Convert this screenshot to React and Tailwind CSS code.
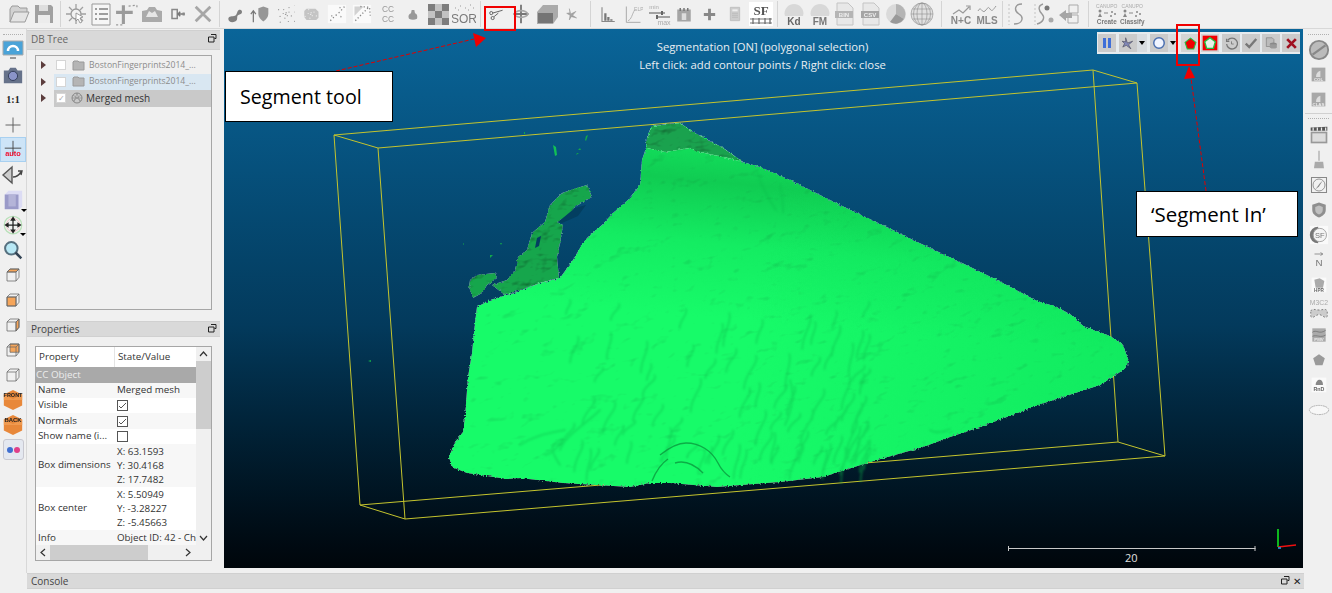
const Ico = ({ children, s = 22 }) => (
  <svg width={s} height={s} viewBox="0 0 24 24" fill="none" className="blur-[0.3px] shrink-0">{children}</svg>
)
const T = ({ x = 12, y = 16, size = 9, fill = '#777', w = 700, children }) => (
  <text x={x} y={y} fontSize={size} fill={fill} fontWeight={w} textAnchor="middle" fontFamily="Liberation Sans, sans-serif">{children}</text>
)
const Dots = ({ n = 9, r = 0.9, fill = '#777' }) => (
  <g fill={fill}>{Array.from({ length: n }).map((_, i) => (
    <circle key={i} cx={12 + Math.cos(i * 2.4) * (i * 0.95)} cy={12 + Math.sin(i * 2.4) * (i * 0.95)} r={r} />
  ))}</g>
)
const Cube = ({ face }) => (
  <g stroke="#666" strokeWidth="1" fill="none">
    {face === 'back' && <path d="M8 4h12v11H8z" fill="#f5a55a" />}
    {face === 'top' && <path d="M4 8l4-4h12l-4 4z" fill="#f5a55a" />}
    {face === 'right' && <path d="M16 8l4-4v11l-4 5z" fill="#f5a55a" />}
    {face === 'front' && <path d="M4 8h12v12H4z" fill="#f5a55a" />}
    <path d="M4 8h12v12H4zM4 8l4-4h12v11l-4 5M16 8l4-4" />
  </g>
)

const topIcons = [
  [
    <Ico s={24}><path d="M3 20V7l2-3h6l2 2h7v4" fill="#d2d2d2" stroke="#9a9a9a" /><path d="M3 20l4-10h15l-4 10z" fill="#e4e4e4" stroke="#9a9a9a" /></Ico>,
    <Ico s={24}><path d="M3 3h16l2 2v16H3z" fill="#a0a0a0" /><path d="M7 3h9v6H7z" fill="#dedede" /><path d="M6 13h12v8H6z" fill="#ececec" /></Ico>,
  ],
  [
    <Ico s={24}><circle cx="12" cy="12" r="5" stroke="#9a9a9a" strokeWidth="1.3" fill="#f2f2f2" /><path d="M12 2v5M12 17v5M2 12h5M17 12h5M5 5l3 3M16 16l3 3M5 19l3-3M16 8l3-3" stroke="#a0a0a0" strokeWidth="1.3" /><path d="M12 11l7 4-3 1 2 4-2 1-2-4-2 2z" fill="#fff" stroke="#888" strokeWidth=".8" /></Ico>,
    <Ico s={24}><path d="M3 2h18v21H3z" stroke="#999" fill="#f6f6f6" /><path d="M6 7h2M6 12h2M6 17h2M10 7h9M10 12h9M10 17h9" stroke="#808080" strokeWidth="1.5" /></Ico>,
    <Ico s={25}><path d="M9 3v18M2 10h16" stroke="#9a9a9a" strokeWidth="3" /><path d="M14 4l8-1M22 3v4M2 22h7" stroke="#999" strokeWidth="1.2" strokeDasharray="2 2" /></Ico>,
    <Ico s={24}><path d="M2 9l5-1 2-3h6l2 3 5 1v11H2z" fill="#aaa" /><path d="M9 9l3 2 3-2 3 6H6z" fill="#e6e6e6" /></Ico>,
    <Ico s={18}><path d="M4 6h7v12H4z" stroke="#888" strokeWidth="2" /><path d="M21 12h-9M15 9l-3 3 3 3" stroke="#777" strokeWidth="2" /><path d="M18 10h3v4h-3z" fill="#888" /></Ico>,
    <Ico s={22}><path d="M4 4l16 16M20 4L4 20" stroke="#a6a6a6" strokeWidth="3" /></Ico>,
  ],
  [
    <Ico s={20}><path d="M4 18c0-4 5-3 8-4s2-6 5-7 4 2 3 4-4 1-5 3 1 5-3 7-8 0-8-3z" fill="#808080" /></Ico>,
    <Ico s={20}><path d="M4 22V9M1 12l3-4 3 4" stroke="#777" strokeWidth="1.5" /><path d="M10 5l6-2 6 2v7c0 4-3 7-6 9-3-2-6-5-6-9z" fill="#969696" /></Ico>,
    <Ico s={18}><Dots n={24} r={0.8} fill="#909090" /></Ico>,
    <Ico s={18}><path d="M3 8l3-3h12l4 4v8l-3 3H6l-3-4z" fill="#c4c4c4" /><Dots n={16} r={0.8} fill="#eee" /></Ico>,
    <Ico s={20}><path d="M1 1h22v22H1z" fill="#fafafa" /><path d="M4 20l6-6 5-4 6-7" stroke="#888" strokeWidth="1.6" strokeDasharray="1.5 3" /><path d="M5 14l3 1M15 4l3 2M16 15l3 1" stroke="#999" strokeWidth="1.6" strokeDasharray="1.5 2" /></Ico>,
    <Ico s={20}><path d="M1 1h22v22H1z" fill="#fafafa" /><path d="M3 3h11L3 14z" fill="#aaa" opacity=".5" /><path d="M4 20L20 4M10 3l11 1 1 10" stroke="#888" strokeWidth="1.6" strokeDasharray="1.5 2.5" /></Ico>,
    <Ico s={20}><T y={10} size={10} fill="#999" w={400}>CC</T><T y={21} size={10} fill="#999" w={400}>CC</T></Ico>,
    <Ico s={16}><path d="M6 19c-2-4 0-7 3-8l1-5h4l1 5c3 1 4 4 3 8-4 2-8 2-12 0z" fill="#999" /></Ico>,
    <Ico s={21}><path d="M0 0h8v8H0zM16 0h8v8h-8zM8 8h8v8H8zM0 16h8v8H0zM16 16h8v8h-8z" fill="#7d7d7d" /><path d="M8 0h8v8H8zM0 8h8v8H0zM16 8h8v8h-8zM8 16h8v8H8z" fill="#c2c2c2" /></Ico>,
    <Ico s={24}><T y={21} size={12} fill="#7a7a7a" w={400}>SOR</T><path d="M3 6h1M8 4h1M13 6h1M18 3h1M6 8h1M16 8h1M21 6h1" stroke="#999" /></Ico>,
  ],
  [
    <Ico s={17}><circle cx="6" cy="10" r="2.2" stroke="#666" strokeWidth="1.4" /><circle cx="8" cy="17" r="2.2" stroke="#666" strokeWidth="1.4" /><path d="M8 10l14-4M10 15l6-5" stroke="#666" strokeWidth="1.4" /></Ico>,
    <Ico s={20}><path d="M12 1v22M3 12h18" stroke="#777" strokeWidth="2.2" /><ellipse cx="12" cy="12" rx="8" ry="4" stroke="#a8a8a8" strokeWidth="2" /></Ico>,
    <Ico s={24}><path d="M2 10l6-7h15v12l-5 7H2z" fill="#ababab" /><path d="M3 11h15v10H3z" fill="#757575" /></Ico>,
    <Ico s={16}><path d="M8 4l2 8 8-4-5 6 6 4-8-2-3 5 1-7-5-3 5-1z" fill="#a5a5a5" stroke="#888" strokeWidth=".6" /></Ico>,
  ],
  [
    <Ico s={18}><path d="M4 3v19h17" stroke="#888" strokeWidth="1.5" /><path d="M7 11h3v10H7zM11 16h3v5h-3zM15 19h3v2h-3z" fill="#777" /></Ico>,
    <Ico s={20}><path d="M4 3v19h17" stroke="#aaa" strokeWidth="1.2" /><path d="M6 20c4-1 5-8 8-13" stroke="#aaa" /><T x={19} y={8} size={6} fill="#aaa" w={400}>ELP</T></Ico>,
    <Ico s={24}><T x={7} y={7} size={6} fill="#aaa" w={400}>min</T><path d="M2 11h16M10 15h13" stroke="#888" strokeWidth="1.5" /><path d="M15 9v4M10 13v4" stroke="#666" strokeWidth="2" /><T x={17} y={23} size={7} fill="#aaa" w={400}>max</T></Ico>,
    <Ico s={18}><path d="M3 6h18v16H3z" fill="#a5a5a5" /><path d="M7 4v4M12 4v4M17 4v4" stroke="#777" strokeWidth="2" /><path d="M9 11h6v9H9z" fill="#ddd" /></Ico>,
    <Ico s={17}><path d="M12 4v16M4 12h16" stroke="#888" strokeWidth="4" /></Ico>,
    <Ico s={16}><path d="M5 2h14v20H5z" fill="#cdcdcd" stroke="#b4b4b4" /><path d="M8 5h8v3H8z" fill="#eee" /><path d="M8 11h8M8 14h8M8 17h8" stroke="#aaa" strokeDasharray="2 1" /></Ico>,
    <Ico s={24}><path d="M0 0h24v24H0z" fill="#fff" /><text x="12" y="13" textAnchor="middle" fontSize="13" fontWeight="700" fill="#555" fontFamily="Liberation Serif, serif">SF</text><path d="M1 17h22M1 21h22" stroke="#777" strokeWidth="1.2" /><path d="M4 16v6M10 16v6M16 16v6M21 16v6" stroke="#666" strokeWidth="1.2" /></Ico>,
  ],
  [
    <Ico s={24}><path d="M3 14c-2-6 3-12 9-12s11 6 9 12z" fill="#d8d8d8" /><T y={23} size={10} fill="#666">Kd</T></Ico>,
    <Ico s={24}><path d="M3 14c-2-6 3-12 9-12s11 6 9 12z" fill="#d8d8d8" /><T y={23} size={10} fill="#777">FM</T></Ico>,
    <Ico s={24}><path d="M4 1h11l5 5v17H4z" fill="#e8e8e8" stroke="#c4c4c4" /><path d="M2 9h18v7H2z" fill="#b5b5b5" /><T x={11} y={15} size={6} fill="#eee">BIN</T></Ico>,
    <Ico s={24}><path d="M4 1h11l5 5v17H4z" fill="#e8e8e8" stroke="#c4c4c4" /><path d="M2 9h18v7H2z" fill="#a5a5a5" /><T x={11} y={15} size={6} fill="#eee">CSV</T></Ico>,
    <Ico s={24}><circle cx="12" cy="12" r="10" fill="#dadada" /><path d="M12 12V2a10 10 0 0 1 8 15z" fill="#b4b4b4" /><path d="M12 12l8 5a10 10 0 0 1-14 3z" fill="#999" /></Ico>,
    <Ico s={24}><circle cx="12" cy="12" r="11" fill="#e0e0e0" stroke="#8d8d8d" strokeWidth=".6" /><path d="M1 12h22M2.5 7h19M2.5 17h19M12 1v22" stroke="#8d8d8d" strokeWidth=".6" /><ellipse cx="12" cy="12" rx="5" ry="11" stroke="#8d8d8d" strokeWidth=".6" /><ellipse cx="12" cy="12" rx="8.5" ry="11" stroke="#8d8d8d" strokeWidth=".6" /></Ico>,
  ],
  [
    <Ico s={24}><T y={22} size={10} fill="#888">N+C</T><path d="M4 12l6-4 4 3 6-6M17 4h4v4" stroke="#999" strokeWidth="1.2" /></Ico>,
    <Ico s={24}><T y={22} size={10} fill="#888">MLS</T><path d="M3 9c3-6 4 3 7 0s3-5 5-2 3 1 6-3" stroke="#999" /></Ico>,
  ],
  [
    <Ico s={24}><path d="M3 2v21" stroke="#c4c4c4" strokeDasharray="2 2" /><path d="M16 2c-8 0-8 7-3 10s4 10-5 10" stroke="#999" strokeWidth="1.4" /></Ico>,
    <Ico s={24}><path d="M3 2v21" stroke="#c4c4c4" strokeDasharray="2 2" /><path d="M11 2c-6 2-4 7-1 10s2 8-5 10" stroke="#999" strokeWidth="1.4" /><circle cx="15" cy="6" r="2.5" fill="#777" /><circle cx="19" cy="18" r="2.5" fill="#aaa" /></Ico>,
    <Ico s={24}><path d="M12 3h9v8h-9z" stroke="#aaa" /><path d="M2 13l7-5v3h6v5H9v3z" fill="#a5a5a5" /><path d="M11 13h10v8H11z" stroke="#aaa" /></Ico>,
  ],
  [
    <Canupo label="Create" />,
    <Canupo label="Classify" />,
  ],
]
const sepWidths = ['w-[6px]', 'w-[6px]', 'w-[6px]', 'w-[10px]', 'w-[8px]', 'w-[14px]', 'w-[6px]', 'w-[12px]']

function Canupo({ label }) {
  return (
    <div className="w-[25px] flex flex-col items-center blur-[0.2px] font-['Liberation_Sans',sans-serif]">
      <span className="text-[5px] leading-[6px] text-[#aaa]">CANUPO</span>
      <svg width="20" height="9" viewBox="0 0 20 9" fill="#888"><circle cx="3" cy="2" r="1.5" /><path d="M1 8l2-4 2 4z" /><path d="M7 4h4" stroke="#888" /><circle cx="15" cy="3" r="1" /><circle cx="18" cy="5" r="1" /><circle cx="14" cy="7" r="1" /></svg>
      <span className="text-[6.4px] leading-[8px] font-bold text-[#777]">{label}</span>
    </div>
  )
}

const leftIcons = [
  <Ico s={24}><path d="M2 3h20v14H2z" fill="#4aa3d8" stroke="#aaa" /><path d="M7 13a5 5 0 0 1 10 0" stroke="#fff" strokeWidth="2.5" /><path d="M9 20h6" stroke="#999" strokeWidth="2" /></Ico>,
  <Ico s={22}><path d="M2 7h5l2-3h6l2 3h5v14H2z" fill="#66728a" /><circle cx="12" cy="13" r="5" fill="#8a94c8" stroke="#2f3a55" /></Ico>,
  <span className="text-[10px] font-bold text-[#222] font-['Liberation_Serif',serif]">1:1</span>,
  <Ico s={18}><path d="M12 2v20M2 12h20" stroke="#555" strokeWidth="1.2" /></Ico>,
  <Ico s={22}><path d="M12 2v15M3 10h18" stroke="#444" strokeWidth="1" /><text x="12" y="18" textAnchor="middle" fontSize="8" fontWeight="700" fill="#f01030" fontFamily="Liberation Sans, sans-serif">auto</text></Ico>,
  <Ico s={24}><path d="M2 12l9-8v16z" fill="#ccc" stroke="#555" strokeWidth="1.4" /><path d="M12 14c4 0 6-2 8-5M17 8l4 0-1 4" stroke="#444" strokeWidth="1.4" /></Ico>,
  <div className="relative"><Ico s={22}><path d="M3 6l4-4h15v17l-3 3H3z" fill="#dcdcf4" /><path d="M3 6h15v16H3z" fill="#9a9ac8" /><path d="M7 6h8v13H7z" fill="#b4b4d8" /></Ico><span className="absolute right-[-3px] bottom-[-1px] border-x-[3px] border-t-[3px] border-x-transparent border-t-black" /></div>,
  <div className="relative"><Ico s={20}><circle cx="12" cy="12" r="10.5" stroke="#b8e0b8" strokeWidth="1.5" /><circle cx="12" cy="12" r="8" stroke="#f0c0c0" /><path d="M12 3v18M3 12h18M12 3l-2 3h4zM12 21l-2-3h4zM3 12l3-2v4zM21 12l-3-2v4z" stroke="#222" strokeWidth="1.5" /></Ico><span className="absolute right-[-3px] bottom-[-1px] border-x-[3px] border-t-[3px] border-x-transparent border-t-black" /></div>,
  <Ico s={20}><circle cx="10" cy="10" r="7.5" fill="#b8e8f5" stroke="#56707f" strokeWidth="2.4" /><path d="M15 15l7 7" stroke="#345" strokeWidth="3" /></Ico>,
  <Ico s={18}><Cube face="top" /></Ico>,
  <Ico s={18}><Cube face="front" /></Ico>,
  <Ico s={18}><Cube face="right" /></Ico>,
  <Ico s={18}><Cube face="back" /></Ico>,
  <Ico s={18}><Cube /></Ico>,
  <Ico s={22}><path d="M12 1l10 5v12l-10 5-10-5V6z" fill="#e8883a" /><path d="M2 6l10 5 10-5v6l-10 0-10 0z" fill="#f09a50" /><T y={9} size={6} fill="#222">FRONT</T></Ico>,
  <Ico s={22}><path d="M12 1l10 5v12l-10 5-10-5V6z" fill="#e8883a" /><path d="M2 6l10 5 10-5v6l-10 0-10 0z" fill="#f09a50" /><T y={9} size={6.5} fill="#222">BACK</T></Ico>,
  <div className="w-[21px] h-[21px] rounded-[3px] border border-[#c8c8d0] bg-[#e4e8f0] flex items-center justify-center gap-[1px]"><span className="w-[6px] h-[6px] rounded-full bg-[#3f6fd0]" /><span className="w-[6px] h-[6px] rounded-full bg-[#e0408a]" /></div>,
]

const Cloud = ({ label }) => (
  <Ico s={15}><path d="M1 1h22v22H1z" fill="#a8a8a8" /><path d="M8 16c0-6 3-9 7-10v10z" fill="#ddd" /><T y={22} size={7} fill="#eee">{label}</T></Ico>
)
const rightTop = [
  <Ico s={22}><circle cx="12" cy="12" r="10" fill="#bbb" stroke="#888" strokeWidth="2" /><path d="M5 17L19 7" stroke="#888" strokeWidth="2.5" /></Ico>,
  <Cloud label="COL" />,
  <Cloud label="CLAS" />,
]
const rightBottom = [
  <Ico s={20}><path d="M2 8h20v14H2z" fill="#999" /><path d="M4 10h16v10H4z" fill="#ddd" /><path d="M2 3l20-1v5H2z" fill="#555" /><path d="M5 3v4M10 3v4M15 3v4M20 3v4" stroke="#eee" strokeWidth="1.5" /></Ico>,
  <Ico s={20}><path d="M11 1h2v12h-2z" fill="#bbb" /><path d="M7 14h10l1 8H6z" fill="#aaa" /></Ico>,
  <Ico s={18}><path d="M2 2h20v20H2z" stroke="#888" strokeWidth="1.4" fill="#f2f2f2" /><circle cx="12" cy="12" r="8" stroke="#777" /><path d="M7 18l6-8 4-4-5 8z" fill="#888" /></Ico>,
  <Ico s={18}><path d="M12 2l9 3v7c0 5-4 8-9 10-5-2-9-5-9-10V5z" fill="#8f8f8f" /><path d="M12 6l5 2v4c0 3-2 5-5 6-3-1-5-3-5-6V8z" fill="#c0c0c0" /></Ico>,
  <Ico s={20}><path d="M1 1h22v22H1z" fill="#fafafa" /><path d="M11 2a10 10 0 0 0 0 20z" fill="#777" /><circle cx="13" cy="12" r="8" fill="#f4f4f4" stroke="#999" /><T x={13} y={16} size={9} fill="#777" w={400}>SF</T></Ico>,
  <Ico s={18}><path d="M6 4h11M14 2l3 2-3 2" stroke="#777" /><T y={20} size={13} fill="#777" w={400}>N</T></Ico>,
  <Ico s={16}><path d="M1 1h22v22H1z" fill="#fafafa" /><path d="M5 4l8-2 7 4-2 10H7z" fill="#aaa" /><T y={22} size={7} fill="#666">HPR</T></Ico>,
  <Ico s={22}><T y={7} size={7.5} fill="#aaa" w={400}>M3C2</T><path d="M3 13c2-3 5-1 9-1s7-2 9 1v6c-3 3-5-2-9-2s-6 5-9 2z" fill="#ccc" stroke="#777" strokeDasharray="2 2" /></Ico>,
  <Ico s={16}><path d="M2 2h20v20H2z" fill="#aaa" /><path d="M2 8c6-5 10 4 20-3M2 14c7-3 12 3 20-2" stroke="#666" /><T y={21} size={6.5} fill="#eee">PMV</T></Ico>,
  <Ico s={14}><path d="M12 2l10 7-4 12H6L2 9z" fill="#9a9a9a" /></Ico>,
  <Ico s={16}><path d="M1 1h22v22H1z" fill="#fafafa" /><path d="M7 12c0-5 3-8 6-8s5 3 5 8z" fill="#888" /><T y={21} size={8} fill="#666">RnD</T></Ico>,
  <Ico s={22}><ellipse cx="12" cy="12" rx="10.5" ry="5" stroke="#aaa" fill="#f7f7f7" strokeDasharray="2 .6" /></Ico>,
]

const Grip = () => <div className="border-t border-dotted border-[#b0b0b0] mx-[3px] mb-[2px]" />

const VSep = ({ className }) => (
  <div className={`${className} h-[26px] shrink-0 flex justify-center gap-[2px]`}>
    <div className="w-px h-full bg-[#d4d4d4]" />
  </div>
)

function TopBar() {
  return (
    <div className="h-[29px] shrink-0 flex items-center pl-[6px] bg-[#f0f0f0] border-b border-[#d8d8d8]">
      {topIcons.map((group, g) => (
        <div key={g} className="flex items-center">
          {group.map((icon, i) => (
            <div key={i} className="w-[25.5px] h-[26px] flex items-center justify-center shrink-0">{icon}</div>
          ))}
          {g < sepWidths.length && <VSep className={sepWidths[g]} />}
        </div>
      ))}
    </div>
  )
}

function SideBar({ children, className }) {
  return <div className={`shrink-0 bg-[#f0f0f0] pt-[5px] ${className}`}>{children}</div>
}

const Slot = ({ children, active }) => (
  <div className={`h-[25px] flex items-center justify-center ${active ? 'bg-[#cde4f7] border border-[#a8d0f0]' : ''}`}>{children}</div>
)

const DockIcon = () => (
  <svg width="9" height="9" viewBox="0 0 9 9" fill="none" stroke="#222" className="shrink-0 mt-[2px]"><path d="M3 .5h5v4H6.5M.5 3h5.5v5H.5z" /></svg>
)

function TitleBar({ title, close, className }) {
  return (
    <div className={`flex bg-[#d9d9d9] pl-[4px] pr-[3px] border-y border-[#d0d0d0] text-[#444] ${className}`}>
      <span className="flex-1 leading-[14px]">{title}</span>
      <DockIcon />
      {close && <span className="ml-[3px] text-[10px] leading-[14px] text-[#222]">✕</span>}
    </div>
  )
}

const Triangle = () => <span className="w-0 h-0 border-y-[4px] border-l-[5px] border-y-transparent border-l-[#5c3d3d] shrink-0" />

const Folder = () => (
  <svg width="13" height="11" viewBox="0 0 13 11" className="shrink-0"><path d="M1 2l1-1h4l1 1h5v8H1z" fill="#b5b5b5" stroke="#9a9a9a" /></svg>
)
const MeshIcon = () => (
  <svg width="12" height="12" viewBox="0 0 12 12" fill="none" stroke="#888" className="shrink-0"><circle cx="6" cy="6" r="5" /><path d="M1 6h10M6 1l3 9M6 1L3 10M2 3l8 6M10 3L2 9" strokeWidth=".6" /></svg>
)

function TreeRow({ selected, hover, label, checked, dark }) {
  return (
    <div className="h-[16.5px] flex items-center">
      <div className="w-[18px] pl-[5px] flex items-center"><Triangle /></div>
      <div className={`flex-1 h-full flex items-center pl-[2px] ${selected ? 'bg-[#c9c9c9]' : hover ? 'bg-[#d9e7f2]' : ''}`}>
        <span className="w-[10px] h-[10px] bg-white border border-[#d5d5d5] flex items-center justify-center text-[8px] leading-none text-[#aaa] shrink-0">{checked ? '✓' : ''}</span>
        <span className={dark ? 'ml-[5px] mr-[3px]' : 'ml-[6px] mr-[4px]'}>{dark ? <MeshIcon /> : <Folder />}</span>
        <span className={dark ? 'text-[#333] text-[10px]' : 'text-[#8b8b8b] text-[8.6px]'}>{label}</span>
      </div>
    </div>
  )
}

const Check = ({ on }) => (
  <span className="w-[11px] h-[11px] bg-white border border-[#555] flex items-center justify-center shrink-0">
    {on && <svg width="9" height="9" viewBox="0 0 9 9" fill="none" stroke="#555"><path d="M1 5l2 2 5-5" /></svg>}
  </span>
)

const propRows = [
  { k: 'Name', v: 'Merged mesh', h: 'h-[15px]', alt: true },
  { k: 'Visible', v: <Check on />, h: 'h-[15px]' },
  { k: 'Normals', v: <Check on />, h: 'h-[16px]', alt: true },
  { k: 'Show name (i...', v: <Check />, h: 'h-[15px]' },
  { k: 'Box dimensions', v: ['X: 63.1593', 'Y: 30.4168', 'Z: 17.7482'], h: 'h-[43px]', alt: true },
  { k: 'Box center', v: ['X: 5.50949', 'Y: -3.28227', 'Z: -5.45663'], h: 'h-[43px]' },
  { k: 'Info', v: 'Object ID: 42 - Ch', h: 'h-[16px]', alt: true },
]

function PropertiesTable() {
  return (
    <div className="h-[215px] mx-[8px] mt-[9px] border border-[#a6a6a6] bg-white flex flex-col overflow-hidden text-[9.8px] text-[#333]">
      <div className="flex-1 flex min-h-0">
        <div className="flex-1 min-w-0 overflow-hidden">
          <div className="h-[20px] flex items-center">
            <div className="w-[79px] pl-[3px] border-r border-[#e4e4e4] h-full flex items-center">Property</div>
            <div className="pl-[3px]">State/Value</div>
          </div>
          <div className="h-[16px] bg-[#a9a9a9] text-[#ececec] flex items-center">CC Object</div>
          {propRows.map(r => (
            <div key={r.k} className={`${r.h} flex items-center ${r.alt ? 'bg-[#f7f7f7]' : 'bg-white'}`}>
              <div className="w-[79px] pl-[2px] whitespace-nowrap overflow-hidden">{r.k}</div>
              <div className="pl-[2px] whitespace-nowrap">
                {Array.isArray(r.v) ? r.v.map(line => <div key={line} className="leading-[14px]">{line}</div>) : r.v}
              </div>
            </div>
          ))}
        </div>
        <div className="w-[15px] shrink-0 bg-[#f0f0f0] flex flex-col items-center text-[#333]">
          <svg width="15" height="14" viewBox="0 0 15 14" fill="none" stroke="#333" strokeWidth="1.2"><path d="M4 9l3.5-4L11 9" /></svg>
          <div className="w-full h-[68px] bg-[#cdcdcd]" />
          <div className="flex-1" />
          <svg width="15" height="14" viewBox="0 0 15 14" fill="none" stroke="#333" strokeWidth="1.2"><path d="M4 5l3.5 4L11 5" /></svg>
        </div>
      </div>
      <div className="h-[15px] shrink-0 bg-[#f0f0f0] flex items-center">
        <svg width="14" height="15" viewBox="0 0 14 15" fill="none" stroke="#333" strokeWidth="1.2"><path d="M9 4L5 7.5 9 11" /></svg>
        <div className="w-[98px] h-full bg-[#cdcdcd]" />
        <div className="flex-1" />
        <svg width="14" height="15" viewBox="0 0 14 15" fill="none" stroke="#333" strokeWidth="1.2" className="mr-[16px]"><path d="M5 4l4 3.5L5 11" /></svg>
      </div>
    </div>
  )
}

function LeftPanels() {
  return (
    <div className="w-[197px] shrink-0 bg-[#f0f0f0] flex flex-col pt-[1px] text-[10px] pr-[4px]">
      <TitleBar title="DB Tree" className="h-[20px] pt-[1px] text-[#666]" />
      <div className="h-[255px] mx-[8px] mt-[5px] border border-[#a6a6a6] py-[1px] overflow-hidden">
        <TreeRow label="BostonFingerprints2014_..." />
        <TreeRow label="BostonFingerprints2014_..." hover />
        <TreeRow label="Merged mesh" selected checked dark />
      </div>
      <TitleBar title="Properties" className="h-[16px] mt-[11px]" />
      <PropertiesTable />
    </div>
  )
}

function SegTool({ children, drop, on, className = '' }) {
  return (
    <div className={`flex items-center shrink-0 ${className}`}>
      <div className={`w-[18px] h-[18px] flex items-center justify-center blur-[0.2px] ${on ? 'bg-[#d4d4d4]' : 'bg-[#cbcbcb]'}`}>{children}</div>
      {drop && <div className="w-[10px] h-[18px] bg-[#d8dce0] flex items-center justify-center"><span className="border-x-[3.5px] border-t-[4px] border-x-transparent border-t-black" /></div>}
    </div>
  )
}

function SegmentationBar() {
  return (
    <div className="absolute top-[3px] right-[3px] h-[22px] w-[203px] bg-[#e6ebee] flex items-center pl-px">
      <SegTool><svg width="12" height="12" viewBox="0 0 12 12"><path d="M2 1h3v10H2zM7 1h3v10H7z" fill="#3f6fd8" /></svg></SegTool>
      <SegTool drop className="ml-[3px]"><svg width="14" height="14" viewBox="0 0 24 24"><path d="M8 3l3 9 9-3-7 6 4 7-8-6-6 3 3-6-4-4 6 1z" fill="#8288b8" stroke="#445" strokeWidth="1" /></svg></SegTool>
      <SegTool drop className="ml-[3px]"><svg width="14" height="14" viewBox="0 0 24 24" fill="#f0f4ff" stroke="#4a6fb0" strokeWidth="2.5"><circle cx="12" cy="12" r="9" /></svg></SegTool>
      <SegTool on className="ml-[3px]"><svg width="13" height="13" viewBox="0 0 24 24"><path d="M12 2l10 8-4 12H6L2 10z" fill="#f00000" stroke="#22c040" strokeWidth="2" /></svg></SegTool>
      <SegTool on className="ml-[2px]"><svg width="16" height="16" viewBox="0 0 24 24"><path d="M1 1h22v22H1z" fill="#f00000" /><path d="M12 4l8 6-3 10H7L4 10z" fill="#e8f0e8" stroke="#22c040" strokeWidth="2" /></svg></SegTool>
      <SegTool className="ml-[3px]"><svg width="13" height="13" viewBox="0 0 24 24" fill="none" stroke="#777" strokeWidth="2.4"><path d="M5 6a10 10 0 1 1-2 7" /><path d="M3 3v5h5" /><path d="M12 8v5h4" strokeWidth="1.6" /></svg></SegTool>
      <SegTool className="ml-[2px]"><svg width="14" height="14" viewBox="0 0 24 24" fill="none" stroke="#777" strokeWidth="4"><path d="M3 13l6 6L21 5" /></svg></SegTool>
      <SegTool className="ml-[2px]"><svg width="14" height="14" viewBox="0 0 24 24"><path d="M4 3h10l3 3v12H4z" fill="#bbb" stroke="#777" /><ellipse cx="16" cy="14" rx="6" ry="3" fill="#888" /><path d="M10 14h12v6c-3 2-9 2-12 0z" fill="#999" /></svg></SegTool>
      <SegTool className="ml-[2px]"><svg width="13" height="13" viewBox="0 0 24 24" fill="none" stroke="#a01020" strokeWidth="5"><path d="M4 4l16 16M20 4L4 20" /></svg></SegTool>
    </div>
  )
}

const meshPts = '647,138 652,126 680,123 693,132 723,148 743,162 760,167 790,180 840,205 893,230 913,240 960,262 997,280 1037,301 1057,307 1073,316 1083,326 1110,336 1123,345 1129,362 1123,370 1100,385 1047,402 980,427 950,437 923,447 870,462 823,477 780,482 717,487 670,483 650,483 630,487 563,483 520,478 507,479 467,473 452,467 449,457 455,442 463,432 465,417 468,377 472,353 475,323 477,307 490,300 517,292 540,283 560,278 573,260 583,243 588,237 602,225 613,213 628,200 640,185 642,160 646,148'
const islandPts = '587,185 592,197 583,202 575,207 568,217 557,222 563,225 560,243 557,257 559,278 540,283 520,290 505,295 492,285 507,280 515,270 518,257 527,250 532,233 545,222 550,205 562,193 577,188'
const lumpPts = '470,280 477,275 495,273 497,278 487,285 482,293 473,298 469,287'

// scattered ridges for the rippled middle of the mesh
const ripples = Array.from({ length: 90 }).map((_, i) => {
  const x = 570 + 300 * Math.abs(Math.sin(i * 12.9898))
  const y = 300 + 150 * Math.abs(Math.sin(i * 78.233))
  const dx = -4 - (i % 5) * 2
  const len = 14 + (i * 7) % 22
  return `M${x.toFixed(1)} ${y.toFixed(1)}c3 ${len * 0.3} ${dx} ${len * 0.5} ${dx} ${len}`
})
const creases = [
  'M600 410c-15 15-35 25-40 40M560 465c-10-15-10-20 0-25s-8 15-15 15M520 445c15-10 30-12 45-15',
  'M757 172c5 15 10 25 19 38M780 185c2 12 4 20 3 28',
  'M930 430c6 4 12 2 20-1M790 380c5 15 2 30-5 45',
]
const mound = 'M660 455c10-8 20-12 26-12 14 0 26 8 32 20 3 6 6 10 12 14M652 481c4-10 10-18 16-22M675 463c10-3 20 2 28 10'

function Scene() {
  return (
    <svg viewBox="224 29 1079 539" className="absolute inset-0 w-full h-full">
      <defs>
        <filter id="relief" x="-0.02" y="-0.02" width="1.04" height="1.04" colorInterpolationFilters="sRGB">
          <feTurbulence type="fractalNoise" baseFrequency="0.6" numOctaves="1" seed="2" result="edge" />
          <feDisplacementMap in="SourceGraphic" in2="edge" scale="3.5" xChannelSelector="R" yChannelSelector="G" result="d" />
          <feTurbulence type="fractalNoise" baseFrequency="0.04 0.06" numOctaves="3" seed="7" result="n" />
          <feDiffuseLighting in="n" surfaceScale="1" diffuseConstant="1.22" lightingColor="#fff" result="l">
            <feDistantLight azimuth="225" elevation="58" />
          </feDiffuseLighting>
          <feBlend in="d" in2="l" mode="multiply" result="m" />
          <feComposite in="m" in2="d" operator="in" />
        </filter>
        <filter id="reliefDark" x="-0.05" y="-0.05" width="1.1" height="1.1" colorInterpolationFilters="sRGB">
          <feTurbulence type="fractalNoise" baseFrequency="0.5" numOctaves="1" seed="4" result="edge" />
          <feDisplacementMap in="SourceGraphic" in2="edge" scale="3" xChannelSelector="R" yChannelSelector="G" result="d" />
          <feTurbulence type="fractalNoise" baseFrequency="0.05 0.08" numOctaves="3" seed="3" result="n" />
          <feDiffuseLighting in="n" surfaceScale="2" diffuseConstant="1.2" lightingColor="#fff" result="l">
            <feDistantLight azimuth="225" elevation="58" />
          </feDiffuseLighting>
          <feBlend in="d" in2="l" mode="multiply" result="m" />
          <feComposite in="m" in2="d" operator="in" />
        </filter>
        <linearGradient id="meshFill" gradientUnits="userSpaceOnUse" x1="640" y1="145" x2="625" y2="310">
          <stop offset="0" stopColor="#12dc5a" />
          <stop offset="0.18" stopColor="#10cc52" />
          <stop offset="0.55" stopColor="#14ec62" />
          <stop offset="1" stopColor="#17fb69" />
        </linearGradient>
        <linearGradient id="meshRight" gradientUnits="userSpaceOnUse" x1="750" y1="300" x2="1130" y2="360">
          <stop offset="0" stopColor="#0ee05a" stopOpacity="0" />
          <stop offset="1" stopColor="#0ee05a" stopOpacity="0.6" />
        </linearGradient>
      </defs>
      <g stroke="#c4c42e" strokeWidth="1" fill="none">
        <path d="M334 135L1093 70 1118 442 360 505z" />
        <path d="M378 148L1137 83 1165 456 405 519z" />
        <path d="M334 135l44 13M1093 70l44 13M1118 442l47 14M360 505l45 14" />
      </g>
      <g fill="#12a84a">
        <path d="M553 145l3 2 1 8-2 1z" fill="#12c055" />
        <path d="M586 136l2-1-2 6-1-1zM578 150l2-2 1 2zM579 153l-3 2 1-2zM524 132l1 0 0 2-1 0zM368 361l3-1 0 2zM463 243l1 1-1 1zM500 243l2 0-1 2zM490 255l3 0-3 3z" />
      </g>
      <polygon points={islandPts} fill="#16a64c" filter="url(#reliefDark)" />
      <polygon points={lumpPts} fill="#16a64c" filter="url(#reliefDark)" />
      <path d="M575 208l11-3-8 11-16 7-4-1zM537 238l4-2-2 10-4 2z" fill="#033e60" />
      <g filter="url(#relief)">
        <polygon points={meshPts} fill="url(#meshFill)" />
        <polygon points={meshPts} fill="url(#meshRight)" />
      </g>
      <path d="M647 138l5-12 28-3 13 9 30 16 20 14-15-4-28-6-10-4-25 4-18-4z" fill="#1aa24e" filter="url(#reliefDark)" />
      <g fill="none" stroke="#0cbc4c" strokeWidth="1.8" opacity="0.42" strokeLinecap="round" className="blur-[1px]">
        {ripples.map((d, i) => <path key={i} d={d} />)}
        {creases.map((d, i) => <path key={i} d={d} />)}
      </g>
      <path d={mound} fill="none" stroke="#0a9a3e" strokeWidth="1.4" opacity="0.8" className="blur-[0.5px]" />
      <g stroke="#c8c8c8" strokeWidth="1" fill="none">
        <path d="M1008.5 548.5h247M1008.5 546v5M1255 546v5" />
      </g>
      <g fill="none" strokeWidth="1.5">
        <path d="M1278 529v18" stroke="#10f020" />
        <path d="M1278 547l18-2" stroke="#f01010" />
        <path d="M1278 548h3" stroke="#20a0f0" />
      </g>
    </svg>
  )
}

function Viewport() {
  return (
    <div className="relative w-[1079px] h-[539px] shrink-0 overflow-hidden bg-linear-to-b from-[#0a6599] via-[#033a5c] via-55% to-[#00060b] font-['Open_Sans',sans-serif]">
      <Scene />
      <div className="absolute top-[9px] inset-x-0 flex flex-col items-center pr-[2px] text-[#e8eef2] text-[11.3px] leading-[18px]">
        <div>Segmentation [ON] (polygonal selection)</div>
        <div>Left click: add contour points / Right click: close</div>
      </div>
      <SegmentationBar />
      <div className="absolute left-[901px] top-[522px] text-[11px] leading-[14px] text-[#e0e0e0]">20</div>
    </div>
  )
}

function Annotations() {
  return (
    <>
      <svg viewBox="0 0 1332 593" className="absolute inset-0 w-[1332px] h-[593px] pointer-events-none">
        <rect x="485" y="7" width="30" height="23" fill="none" stroke="#f00000" strokeWidth="2" />
        <rect x="1177" y="25" width="22" height="40" fill="none" stroke="#f00000" strokeWidth="2" />
        <path d="M336 71L474 39" stroke="#e00000" strokeWidth="1" strokeDasharray="4 2" />
        <path d="M473 33l13 5-10 9z" fill="#f00000" />
        <path d="M1206 191L1191 78" stroke="#e00000" strokeWidth="1" strokeDasharray="4 2" />
        <path d="M1184 79l5-13 6 12z" fill="#f00000" />
      </svg>
      <div className="absolute left-[225px] top-[71px] w-[168px] h-[51px] bg-white border border-black flex items-center pl-[14px] text-[19.7px] text-black font-['Open_Sans',sans-serif]">Segment tool</div>
      <div className="absolute left-[1136px] top-[191px] w-[162px] h-[46px] bg-white border border-black flex items-center pl-[14px] text-[20.5px] text-black font-['Open_Sans',sans-serif]">‘Segment In’</div>
    </>
  )
}

export default function App() {
  return (
    <div className="relative w-[1332px] h-[593px] overflow-hidden bg-[#f0f0f0] flex flex-col font-['Open_Sans',sans-serif]">
      <TopBar />
      <div className="flex h-[544px] shrink-0">
        <SideBar className="w-[27px] border-r border-[#d8d8d8]">
          <Grip />
          {leftIcons.map((icon, i) => <Slot key={i} active={i === 4}>{icon}</Slot>)}
        </SideBar>
        <LeftPanels />
        <Viewport />
        <SideBar className="w-[29px] pl-[2px]">
          <Grip />
          {rightTop.map((icon, i) => <Slot key={i}>{icon}</Slot>)}
          <div className="h-[10px] pt-[1px]"><div className="h-px bg-[#d0d0d0]" /><div className="mt-[4px] border-t border-dotted border-[#b0b0b0] mx-[3px]" /></div>
          {rightBottom.map((icon, i) => <Slot key={i}>{icon}</Slot>)}
        </SideBar>
      </div>
      <div className="ml-[27px] text-[10px]">
        <TitleBar title="Console" close className="w-[1277px] h-[16px]" />
      </div>
      <Annotations />
    </div>
  )
}
